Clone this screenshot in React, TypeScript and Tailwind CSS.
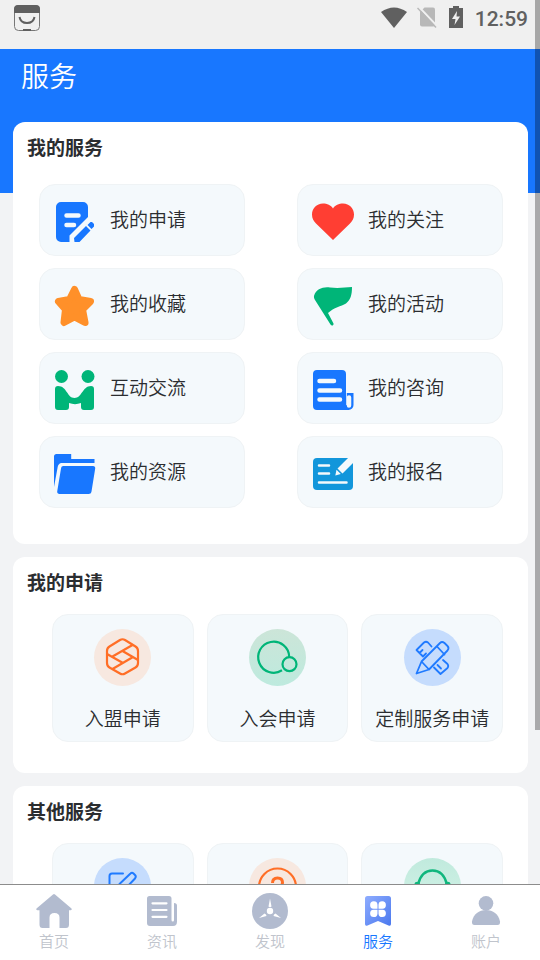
import type {ReactNode} from "react";


interface Item {
    name?: string
    icon: ReactNode
}

interface Tile extends Item {
    color: string
}

interface Tab extends Item {
    active?: boolean
}

const myServices: Item[] = [
    {
        name: "我的申请",
        icon: (
            <svg viewBox="0 0 42 42" className="mt-1 size-[42px]">
                <path fill="#1877ff" d="M7 1h22a5 5 0 0 1 5 5v10L15.500 34.500V41H7a5 5 0 0 1-5-5V6a5 5 0 0 1 5-5z"/>
                <path fill="#1877ff" d="M20.500 41h5L36.500 29.500l-4.500-4.500L20 37zM33.500 24l3-3H38l2 2v2.500l-2.500 2.500z"/>
                <path stroke="#f4f9fc" strokeWidth="4.500" strokeLinecap="round" d="M12.500 14.500h12M12.500 24h7.500"/>
            </svg>
        )
    },
    {
        name: "我的关注",
        icon: (
            <svg viewBox="0 0 42 42" className="mt-1 size-[42px]">
                <path fill="#ff3e33" d="M21 7.500C23 4 27 2.500 31 2.500c6.500 0 11 5 11 11 0 4-1.500 6.500-4 9L21 39 4 22.500c-2.500-2.500-4-5-4-9 0-6 4.500-11 11-11 4 0 8 1.500 10 5z"/>
            </svg>
        )
    },
    {
        name: "我的收藏",
        icon: (
            <svg viewBox="0 0 42 42" className="mt-1 size-[42px]">
                <path fill="#ff9029" stroke="#ff9029" strokeWidth="7" strokeLinejoin="round" d="M20.500 4.500l4.500 10 11.500 2-8 8 2.500 13L20.500 32 10 37.500l1.500-13-7-8 11-2z"/>
            </svg>
        )
    },
    {
        name: "我的活动",
        icon: (
            <svg viewBox="0 0 42 42" className="mt-1 size-[42px]">
                <path fill="#00b578" d="M2 11C4 4 11 1.500 18 2.500c8 1 15 0 22-.5 0 8-1.500 13-6 16.500-5 3-12 4-18 9.500l5.500 10.500c.5 2-2 3-3 1L3 15c-.8-1.200-1.200-2.500-1-4z"/>
            </svg>
        )
    },
    {
        name: "互动交流",
        icon: (
            <svg viewBox="0 0 42 42" className="mt-1 size-[42px]">
                <g fill="#00b578">
                    <circle cx="7.500" cy="7.500" r="6.500"/>
                    <circle cx="34" cy="7.500" r="6.500"/>
                    <path d="M1 20c0-2 1-3 3-3C13 17 13 29 20.500 29s8-12 16.500-12c2 0 3 1 3 3v18c0 2-1 3-3 3h-7c-2 0-3-1-3-3v-4c-4 1.500-8 1.500-12 0v4c0 2-1 3-3 3H4c-2 0-3-1-3-3z"/>
                </g>
            </svg>
        )
    },
    {
        name: "我的咨询",
        icon: (
            <svg viewBox="0 0 42 42" className="mt-1 size-[42px]">
                <path fill="#1877ff" d="M5 1h25a4 4 0 0 1 4 4v19h7.500v12a5 5 0 0 1-5 5H5a4 4 0 0 1-4-4V5a4 4 0 0 1 4-4z"/>
                <path stroke="#f4f9fc" strokeWidth="4.500" strokeLinecap="round" d="M7.500 12H22M7.500 21.500h20.500M7.500 30.500h20.500M37 28.500v8"/>
                <path stroke="#c5defd" strokeWidth="1" d="M34.500 24v12"/>
            </svg>
        )
    },
    {
        name: "我的资源",
        icon: (
            <svg viewBox="0 0 42 42" className="mt-1 size-[42px]">
                <g fill="#1877ff">
                    <path d="M0 3.500A2.500 2.500 0 0 1 2.500 1h14.700v5H40.500v4H8.500C5 10 4 12 3.500 15L0 34z"/>
                    <path d="M9.500 13H39c1.500 0 2.500 1 2.200 2.500L37.500 38.500c-.3 1.700-1.300 2.500-3 2.500H5.500C4 41 3 40 3.200 38.500L7 15.500C7.300 13.800 8 13 9.500 13z"/>
                </g>
            </svg>
        )
    },
    {
        name: "我的报名",
        icon: (
            <svg viewBox="0 0 42 42" className="mt-1 size-[42px]">
                <path fill="#1296db" d="M5 5h32a4 4 0 0 1 4 4v24a4 4 0 0 1-4 4H5a4 4 0 0 1-4-4V9a4 4 0 0 1 4-4z"/>
                <path fill="#f4f9fc" d="M36.500 4.500L25.500 15.500l5 5L41.500 9.500V4.500zM24.500 16.700L23.300 22.500l5.500-1.500z"/>
                <path stroke="#f4f9fc" strokeWidth="2.500" strokeLinecap="round" d="M7 12.500h10M7 20.500h10M7 29.500h27.500"/>
            </svg>
        )
    },
]

const applications: Tile[] = [
    {
        name: "入盟申请",
        color: "bg-[#f7e8e0]",
        icon: (
            <svg viewBox="0 0 57 57" fill="none" stroke="#ff6e26" strokeWidth="2.200" strokeLinejoin="round" className="size-[57px]">
                <path d="M26 11q2.500-1.500 5 0l10.500 6.500q2.500 1.500 2.500 4.500v12q0 3-2.500 4.500L31 44.500q-2.500 1.500-5 0l-10.500-6q-2.500-1.500-2.500-4.500V22q0-3 2.500-4.500z"/>
                <path d="M38.500 16L18.500 27.500M13 25l16 9M28.500 22l15.500 9M39 28L18.500 40"/>
            </svg>
        )
    },
    {
        name: "入会申请",
        color: "bg-linear-to-b from-[#cce5d8] to-[#bdeade]",
        icon: (
            <svg viewBox="0 0 57 57" fill="none" stroke="#00b578" strokeWidth="2.200" className="size-[57px]">
                <path d="M33 41.300A15.500 15.500 0 1 1 40.200 28"/>
                <circle cx="40.500" cy="35.200" r="7"/>
            </svg>
        )
    },
    {
        name: "定制服务申请",
        color: "bg-[#c5dcfd]",
        icon: (
            <svg viewBox="0 0 57 57" fill="none" stroke="#1f7aff" strokeWidth="1.800" strokeLinejoin="round" strokeLinecap="round" className="size-[57px]">
                <path d="M17.500 32.500L36 14q2-2 4.500 0l3 3q2 2 0 4.500L25 40.500l-12.500 4zM17.500 32.500l7.500 8M33 17.500l7.500 8"/>
                <path d="M27.500 17.500l-3.500-4q-2-1.500-4 0l-7.500 7.500 6.500 6.500M15.500 24l3-3M19 27.500l3-3"/>
                <path d="M39 31l4.500 4q1.500 2 0 4l-7 6-6.500-6.500M33.500 36l3.500 3.500M31 39.500l2.500 2.500"/>
            </svg>
        )
    },
]

const otherServices: Tile[] = [
    {
        color: "bg-[#c5dcfd]",
        icon: (
            <svg viewBox="0 0 57 57" fill="none" stroke="#1f7aff" strokeWidth="2" strokeLinejoin="round" strokeLinecap="round" className="size-[57px]">
                <path d="M29 15.500H18q-2.500 0-2.500 2.500v21q0 3 3 3h21q3 0 3-3V29M26 31l-.5-5L36.500 15.500q1.500-1.500 3 0l1.500 1.500q1.500 1.500 0 3.500L31 31z"/>
            </svg>
        )
    },
    {
        color: "bg-[#f7e8e0]",
        icon: (
            <svg viewBox="0 0 57 57" fill="none" stroke="#ff6e26" strokeWidth="2.200" className="size-[57px]">
                <circle cx="28.500" cy="29" r="18.500"/>
                <path strokeWidth="3" d="M23.500 25q0-5 5-5t5 4.500q0 3-5 6.500v4"/>
            </svg>
        )
    },
    {
        color: "bg-linear-to-b from-[#c0eadd] to-[#d5f3e8]",
        icon: (
            <svg viewBox="0 0 57 57" fill="none" stroke="#10b67d" strokeWidth="2.400" className="size-[57px]">
                <path d="M14 27C16 18 21 12.500 28.500 12.500S41 18 43 27"/>
                <rect x="11.500" y="25" width="3.500" height="10" rx="2" fill="#10b67d"/>
                <rect x="42" y="25" width="3.500" height="10" rx="2" fill="#10b67d"/>
            </svg>
        )
    },
]

const tabs: Tab[] = [
    {
        name: "首页",
        icon: (
            <svg viewBox="0 0 36 36" className="size-9">
                <path fill="#b2bbcf" d="M17 1.500q1-.9 2 0L35.500 15.500q.8 1.500-1 1.800H33V31.500q0 3.500-3 3.500h-6.500V24.500q0-4.500-5-4.500t-5 4.500V35H6.500q-3 0-3-3.500V17.300H1.500Q-.3 17 .5 15.500z"/>
            </svg>
        )
    },
    {
        name: "资讯",
        icon: (
            <svg viewBox="0 0 36 36" className="size-9">
                <path fill="#b2bbcf" d="M5.500 3h19.500q2.500 0 2.500 2.500V27q0 1.500 1.300 1.500T30 27V10q3 0 3 2.500v16q0 4.500-4 4.500H6q-3 0-3-3V5.500Q3 3 5.500 3z"/>
                <path stroke="#fff" strokeWidth="2.200" strokeLinecap="round" d="M8.500 10.300h14M8.500 17h14M8.500 23.800h14"/>
            </svg>
        )
    },
    {
        name: "发现",
        icon: (
            <svg viewBox="0 0 36 36" className="size-9">
                <circle cx="18" cy="18" r="18" fill="#b2bbcf"/>
                <g fill="#fff">
                    <circle cx="18" cy="18" r="3.200"/>
                    <path d="M18 5.500l1.500 8q-1.500 1-3 0zM7 25l5.500-4.500q2 .7 2 2.500zM29 25l-7.500-2q0-1.800 2-2.500z"/>
                </g>
            </svg>
        )
    },
    {
        name: "服务",
        active: true,
        icon: (
            <svg viewBox="0 0 36 36" className="size-9">
                <defs>
                    <linearGradient id="bookmark" x1="0" y1="0" x2="1" y2="1">
                        <stop offset="0" stopColor="#8fadff"/>
                        <stop offset="1" stopColor="#4a78ee"/>
                    </linearGradient>
                </defs>
                <path fill="url(#bookmark)" d="M7.500 3h21q2.500 0 2.500 2.500v25.500q0 2.500-2.500 1.500L18 28 7.500 32.500q-2.500 1-2.500-1.500V5.500q0-2.500 2.500-2.500z"/>
                <path fill="#fff" d="M17.500 15.700h-4a3.700 3.700 0 1 1 4-4zM18.500 15.700v-4a3.700 3.700 0 1 1 4 4zM17.500 16.700v4a3.700 3.700 0 1 1-4-4zM18.500 16.700h4a3.700 3.700 0 1 1-4 4z"/>
            </svg>
        )
    },
    {
        name: "账户",
        icon: (
            <svg viewBox="0 0 36 36" className="size-9">
                <g fill="#b2bbcf">
                    <circle cx="18" cy="10.300" r="7.300"/>
                    <path d="M4 28.500C5.500 21 11 17 18 17s12.500 4 14 11.500q.3 3.500-2.500 3.500h-23Q3.700 32 4 28.500z"/>
                </g>
            </svg>
        )
    },
]

const StatusBar = () => {
    return (
        <div className="flex h-[49px] shrink-0 items-start justify-between bg-[#f0f0f0] pl-3.5 pr-3 pt-[3px]">
            <svg viewBox="0 0 26 27" fill="none" className="mt-px h-[27px] w-[26px]">
                <rect x=".5" y="1.500" width="25" height="25" rx="4" stroke="#777"/>
                <path fill="#5f5f5f" d="M0 9V5q0-4 4-4h18q4 0 4 4v4z"/>
                <path stroke="#5f5f5f" strokeWidth="2" d="M5.500 13c1.500 8 13.500 8 15 0M9 26h8"/>
            </svg>
            <div className="flex items-center">
                <svg viewBox="0 0 26 21" className="h-[21px] w-[26px]">
                    <path fill="#606060" d="M0 5Q13-4 26 5L13 21z"/>
                </svg>
                <svg viewBox="0 0 20 22" className="ml-2.5 h-[22px] w-5">
                    <path fill="#b8b8b8" d="M7.500 1.500H16q2 0 2 2v15q0 2-2 2H5q-2 0-2-2V6z"/>
                    <path stroke="#f0f0f0" strokeWidth="2" d="M2 1l18 19"/>
                    <path stroke="#b8b8b8" strokeWidth="1.500" d="M.5 2L19 21.500"/>
                </svg>
                <svg viewBox="0 0 14 22" className="ml-3 h-[22px] w-3.5">
                    <path fill="#606060" d="M4 0h6v2h4v20H0V2h4z"/>
                    <path fill="#f0f0f0" d="M8 5L3 13h3.500L5.500 19 11 10.500H7.500z"/>
                </svg>
                <span className="ml-3 pt-1 font-[Roboto] text-[21px] font-medium leading-6 text-[#606060]">12:59</span>
            </div>
        </div>
    )
}

const Section = ({title, children}: {title: string, children: ReactNode}) => {
    return (
        <section className="rounded-xl bg-white pb-[31px] pl-[26px] pr-[25px] pt-[11px]">
            <h2 className="-ml-3 mb-[18px] text-[19px] font-bold leading-7">{title}</h2>
            {children}
        </section>
    )
}

const TileRow = ({tiles}: {tiles: Tile[]}) => {
    return (
        <div className="grid grid-cols-3 gap-[13px] pl-[13px]">
            {tiles.map((tile, index) => (
                <button key={index} className="flex h-32 flex-col items-center rounded-2xl border border-[#eff3f5] bg-[#f4f9fc] pt-3.5">
                    <span className={"rounded-full " + tile.color}>{tile.icon}</span>
                    <span className="mt-[18px] whitespace-nowrap text-[19px] leading-7">{tile.name}</span>
                </button>
            ))}
        </div>
    )
}

const App = () => {
    return (
        <div className="relative flex h-screen flex-col overflow-hidden bg-[#f2f3f5] font-['Noto_Sans_CJK_SC',sans-serif] font-[350] text-[#2b2d30]">
            <StatusBar/>
            <main className="flex-1 overflow-y-auto [scrollbar-width:none]">
                <header className="h-36 bg-[#1877ff] px-[21px] pt-1.5">
                    <h1 className="text-[28px] font-[350] leading-10 text-white">服务</h1>
                </header>
                <div className="-mt-[71px] ml-[13px] mr-3 flex flex-col gap-[13px] pb-4">
                    <Section title="我的服务">
                        <div className="grid grid-cols-2 gap-x-[52px] gap-y-3 pb-[5px] pt-[5px]">
                            {myServices.map((service) => (
                                <button key={service.name} className="flex h-[72px] items-center gap-3.5 rounded-2xl border border-[#eff3f5] bg-[#f4f9fc] pl-3.5">
                                    {service.icon}
                                    <span className="pb-0.5 text-[19px] leading-7">{service.name}</span>
                                </button>
                            ))}
                        </div>
                    </Section>
                    <Section title="我的申请">
                        <TileRow tiles={applications}/>
                    </Section>
                    <Section title="其他服务">
                        <TileRow tiles={otherServices}/>
                    </Section>
                </div>
            </main>
            <nav className="grid h-[76px] shrink-0 grid-cols-5 border-t border-[#8c8c8c] bg-white">
                {tabs.map((tab) => (
                    <a key={tab.name} href="#" className={tab.active ? "flex flex-col items-center pt-2 text-[#1877ff]" : "flex flex-col items-center pt-2 text-[#c0c4cc]"}>
                        {tab.icon}
                        <span className="text-[15px] leading-6">{tab.name}</span>
                    </a>
                ))}
            </nav>
            <div className="absolute right-0 top-0 h-[76%] w-[5px] bg-black/30"></div>
        </div>
    )
}

export default App
